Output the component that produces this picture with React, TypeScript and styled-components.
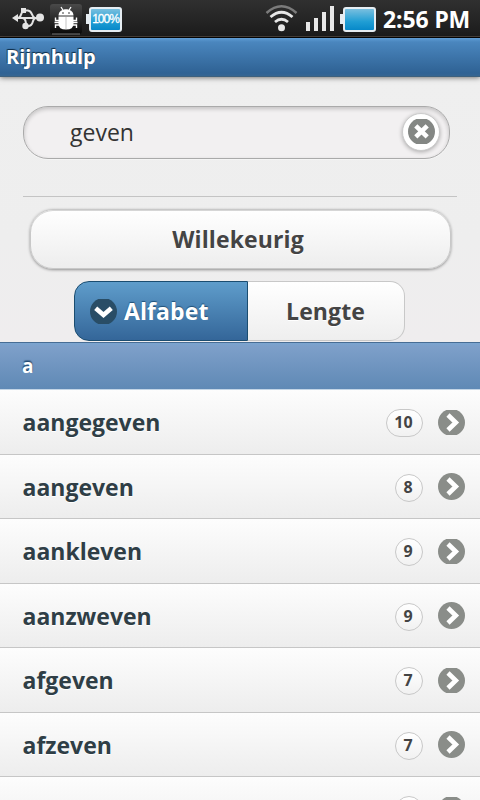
import React from "react";
import styled, { createGlobalStyle } from "styled-components";

const GlobalStyle = createGlobalStyle`
  * { box-sizing: border-box; }
  html, body { margin: 0; padding: 0; overflow: hidden; }
  body { font-family: "Open Sans", "Noto Sans", sans-serif; background: #eee; }
`;

const Screen = styled.div`
  width: 480px;
  height: 800px;
  overflow: hidden;
  display: flex;
  flex-direction: column;
  background: #eee;
`;

const StatusBar = styled.div`
  height: 38px;
  flex: none;
  display: flex;
  justify-content: space-between;
  align-items: flex-start;
  background: linear-gradient(#303030, #1c1c1c 35px);
  border-bottom: 1px solid #050505;
  box-shadow: inset 0 -1px #4a423c;
`;

const StatusGroup = styled.div`
  display: flex;
  height: 38px;
`;

const Clock = styled.time`
  width: 104px;
  padding-left: 7px;
  font: 700 23px/39px "Noto Sans", sans-serif;
  letter-spacing: -0.1px;
  color: #fff;
  white-space: nowrap;
`;

const TitleBar = styled.header`
  height: 39px;
  flex: none;
  padding-left: 6px;
  background: linear-gradient(#5f9cd4, #4a86be 4px, #2f6294 35px, #356592);
  border-bottom: 1px solid #3d607d;
  box-shadow: 0 1px 5px rgba(0, 0, 0, 0.5);
  z-index: 1;
`;

const Title = styled.h1`
  margin: 0;
  font-size: 20px;
  line-height: 37px;
  font-weight: 700;
  letter-spacing: -0.05px;
  color: #fff;
  text-shadow: 0 -1px 1px #10304c, -1px -1px 0 #234b70;
`;

const Controls = styled.section`
  height: 265px;
  flex: none;
  display: flex;
  flex-direction: column;
  padding: 29px 23px 0;
  background: linear-gradient(#efefef, #eee 60%, #efedee);
`;

const SearchField = styled.div`
  width: 427px;
  height: 53px;
  flex: none;
  display: flex;
  align-items: center;
  justify-content: space-between;
  padding: 0 9px 2px 46px;
  border: 1px solid #aaa;
  border-radius: 25px;
  background: #f2f0f1;
  box-shadow: inset 0 2px 4px rgba(0, 0, 0, 0.2), 0 1px 0 rgba(255, 255, 255, 0.4);
`;

const Query = styled.span`
  font-size: 23px;
  line-height: 48px;
  color: #333;
`;

const ClearButton = styled.button`
  width: 38px;
  height: 38px;
  padding: 0;
  display: flex;
  align-items: center;
  justify-content: center;
  border: 1px solid #ccc;
  border-radius: 50%;
  background: #fff;
  box-shadow: 0 1px 4px rgba(0, 0, 0, 0.3);
`;

const Rule = styled.hr`
  width: 434px;
  height: 1px;
  flex: none;
  margin: 37px 0 12px;
  border: 0;
  background: #c4c4c4;
`;

const WideButton = styled.button`
  width: 421px;
  height: 60px;
  flex: none;
  margin-left: 7px;
  padding: 0 5px 0 0;
  border: 1px solid #c8c8c8;
  border-radius: 23px;
  background: linear-gradient(#fff, #ededed);
  box-shadow: 0 1px 3px rgba(0, 0, 0, 0.4), inset 0 1px 0 #d6d6d6;
  font: 700 23px/58px "Open Sans", sans-serif;
  letter-spacing: 0.12px;
  color: #444;
  text-shadow: 0 1px 0 #fff;
`;

const Segments = styled.div`
  display: flex;
  width: 331px;
  height: 60px;
  margin: 12px 0 0 51px;
`;

const Segment = styled.button<{ $active?: boolean }>`
  width: ${(p) => (p.$active ? 174 : 157)}px;
  height: 60px;
  padding: ${(p) => (p.$active ? "0 0 0 15px" : "0 1px 0 0")};
  display: flex;
  align-items: center;
  justify-content: ${(p) => (p.$active ? "flex-start" : "center")};
  gap: 7px;
  border: 1px solid ${(p) => (p.$active ? "#1b4d70" : "#c8c8c8")};
  border-left-width: ${(p) => (p.$active ? 1 : 0)}px;
  border-radius: ${(p) => (p.$active ? "15px 0 0 15px" : "0 15px 15px 0")};
  background: ${(p) =>
    p.$active ? "linear-gradient(#5f9dcb, #346699)" : "linear-gradient(#fff, #eee)"};
  font: 700 23px/58px "Open Sans", sans-serif;
  letter-spacing: 0.1px;
  color: ${(p) => (p.$active ? "#fff" : "#444")};
  text-shadow: ${(p) => (p.$active ? "0 -1px 1px #205078" : "0 1px 0 #fff")};
`;

const Divider = styled.div`
  height: 48px;
  flex: none;
  padding-left: 22px;
  border-top: 1px solid #476d94;
  border-bottom: 1px solid #c3d5e6;
  background: linear-gradient(#7ba5d0, #7d9fc9 4px, #5f89b5);
  font-size: 19px;
  line-height: 46px;
  font-weight: 700;
  color: #fff;
  text-shadow: 0 -1px 1px #1d4870, 0 -2px 1px rgba(40, 75, 112, 0.5);
`;

const Row = styled.li<{ $tall?: boolean }>`
  height: ${(p) => (p.$tall ? 65 : 64)}px;
  flex: none;
  display: flex;
  align-items: center;
  padding: 0 15px 0 22.5px;
  border-bottom: 1px solid #c6c6c6;
  background: linear-gradient(#fdfdfd, #ededed);
`;

const List = styled.ul`
  margin: 0;
  padding: 0;
  flex: 1;
  min-height: 0;
  list-style: none;
`;

const Word = styled.span`
  flex: 1;
  font-size: 23px;
  line-height: 60px;
  font-weight: 700;
  color: #2f3e46;
  text-shadow: 0 1px 0 #fff;
`;

const Count = styled.span<{ $wide?: boolean }>`
  width: ${(p) => (p.$wide ? 37 : 28)}px;
  height: 28px;
  margin: 2px 15px 0 0;
  padding-right: 2px;
  border: 1px solid #c8c8c8;
  border-radius: 14px;
  background: linear-gradient(#fff, #f1f1f1);
  font-size: 16px;
  line-height: 25px;
  font-weight: 700;
  text-align: center;
  color: #444;
`;

const UsbIcon = () => (
  <svg width="50" height="38" viewBox="0 0 50 38" fill="none" stroke="#e4e4e4" strokeWidth="2">
    <path d="M16 18H38M18 18C22 18 20 10.500 25 10.500H28C33 11 31 17 35 18M22 18C28 18 24 26 28 26C35 26 31 18 36 18" />
    <path d="M12 18L18 14V22Z M21 8H26V13H21Z" fill="#e4e4e4" stroke="none" />
    <circle cx="40" cy="17.500" r="4" fill="#e4e4e4" stroke="none" />
    <circle cx="25.500" cy="26" r="3.200" fill="#e4e4e4" stroke="none" />
  </svg>
);

const DebugIcon = () => (
  <svg width="36" height="38" viewBox="50 0 36 38">
    <defs>
      <linearGradient id="tile" x2="0" y2="1">
        <stop stopColor="#4a4a4a" />
        <stop offset="1" stopColor="#090909" />
      </linearGradient>
    </defs>
    <rect x="50" y="4" width="32" height="30" rx="3" fill="url(#tile)" />
    <path d="M52 34H80" stroke="#777" />
    <path d="M61 7L63.500 11M71 7L68.500 11" stroke="#fff" strokeWidth="1.300" />
    <path d="M58.500 15.500C58.500 7 73.500 7 73.500 15.500Z" fill="#fff" />
    <path d="M58.500 16.500H73.500V24Q73.500 29.500 66 29.500Q58.500 29.500 58.500 24Z" fill="#fff" />
    <path d="M59 20.500H55.500V17.500M59 22.500H54.500M59 25H55.500V28M73 20.500H76.500V17.500M73 22.500H77.500M73 25H76.500V28" fill="none" stroke="#fff" strokeWidth="1.400" />
    <path d="M66 17V29" stroke="#aaa" strokeWidth=".7" />
    <circle cx="63" cy="13" r=".8" fill="#222" />
    <circle cx="69" cy="13" r=".8" fill="#222" />
  </svg>
);

const BatteryShell = styled.div`
  width: 33px;
  height: 25px;
  margin: 7px 0 0 3px;
  border: 2px solid #e6edf2;
  border-radius: 3px;
  background: linear-gradient(#79bfdf, #209ed4 60%, #0789c9);
  font: 400 12px/21px "Liberation Sans", sans-serif;
  letter-spacing: -1px;
  -webkit-text-stroke: 0.3px #fff;
  text-align: center;
  white-space: nowrap;
  color: #fff;
`;

const BatteryTip = styled.div`
  width: 3px;
  height: 10px;
  margin: 14px -3px 0 0;
  background: #e6edf2;
`;

const Battery = ({ label }: { label?: string }) => (
  <>
    <BatteryTip />
    <BatteryShell>{label}</BatteryShell>
  </>
);

const SignalIcons = () => (
  <svg width="75" height="38" viewBox="265 0 75 38" fill="none">
    <path d="M266.500 13Q281.500 -0.500 296.500 13" stroke="#7b7b7b" strokeWidth="2.500" />
    <path d="M270.500 17Q281.500 7.500 292.500 17M275 22Q281.500 16.500 288 22" stroke="#e7e7e7" strokeWidth="2.800" />
    <circle cx="281.500" cy="27.700" r="3.500" fill="#e7e7e7" />
    <path d="M306 22H310V31H306ZM314 18H318V31H314ZM322 12H326V31H322ZM330 6H334V31H330Z" fill="#e7e7e7" />
  </svg>
);

const glyphs = {
  cross: { fill: "#848784", d: "M7.800 7.800L19.200 18.800M19.200 7.800L7.800 18.800" },
  down: { fill: "#294d66", d: "M5.700 10.200L13.500 17L21.300 10.200" },
  right: { fill: "#8a8d89", d: "M10 6L17.800 13.500L10 21" },
};

// A trimmed icon has its circle cut flat at the top and bottom.
const RoundIcon = ({ kind, trimmed }: { kind: keyof typeof glyphs; trimmed?: boolean }) => (
  <svg
    width="27"
    height={trimmed ? 25 : 27}
    viewBox={trimmed ? "0 1 27 25" : "0 0 27 27"}
    fill="none"
  >
    <circle cx="13.500" cy="13.500" r="13.500" fill={glyphs[kind].fill} />
    <path d={glyphs[kind].d} stroke="#fff" strokeWidth="4.600" />
  </svg>
);

const words: [string, number][] = [
  ["aangegeven", 10],
  ["aangeven", 8],
  ["aankleven", 9],
  ["aanzweven", 9],
  ["afgeven", 7],
  ["afzeven", 7],
  ["", 8],
];

export default function App() {
  return (
    <Screen>
      <GlobalStyle />
      <StatusBar>
        <StatusGroup>
          <UsbIcon />
          <DebugIcon />
          <Battery label="100%" />
        </StatusGroup>
        <StatusGroup>
          <SignalIcons />
          <Battery />
          <Clock>2:56 PM</Clock>
        </StatusGroup>
      </StatusBar>
      <TitleBar>
        <Title>Rijmhulp</Title>
      </TitleBar>
      <Controls>
        <SearchField>
          <Query>geven</Query>
          <ClearButton aria-label="Wissen">
            <RoundIcon kind="cross" trimmed />
          </ClearButton>
        </SearchField>
        <Rule />
        <WideButton>Willekeurig</WideButton>
        <Segments>
          <Segment $active>
            <RoundIcon kind="down" trimmed />
            <span>Alfabet</span>
          </Segment>
          <Segment>Lengte</Segment>
        </Segments>
      </Controls>
      <Divider>a</Divider>
      <List>
        {words.map(([word, count], i) => (
          <Row key={i} $tall={i % 2 === 0}>
            <Word>{word}</Word>
            <Count $wide={count > 9}>{count}</Count>
            <RoundIcon kind="right" trimmed={i % 2 === 0} />
          </Row>
        ))}
      </List>
    </Screen>
  );
}
